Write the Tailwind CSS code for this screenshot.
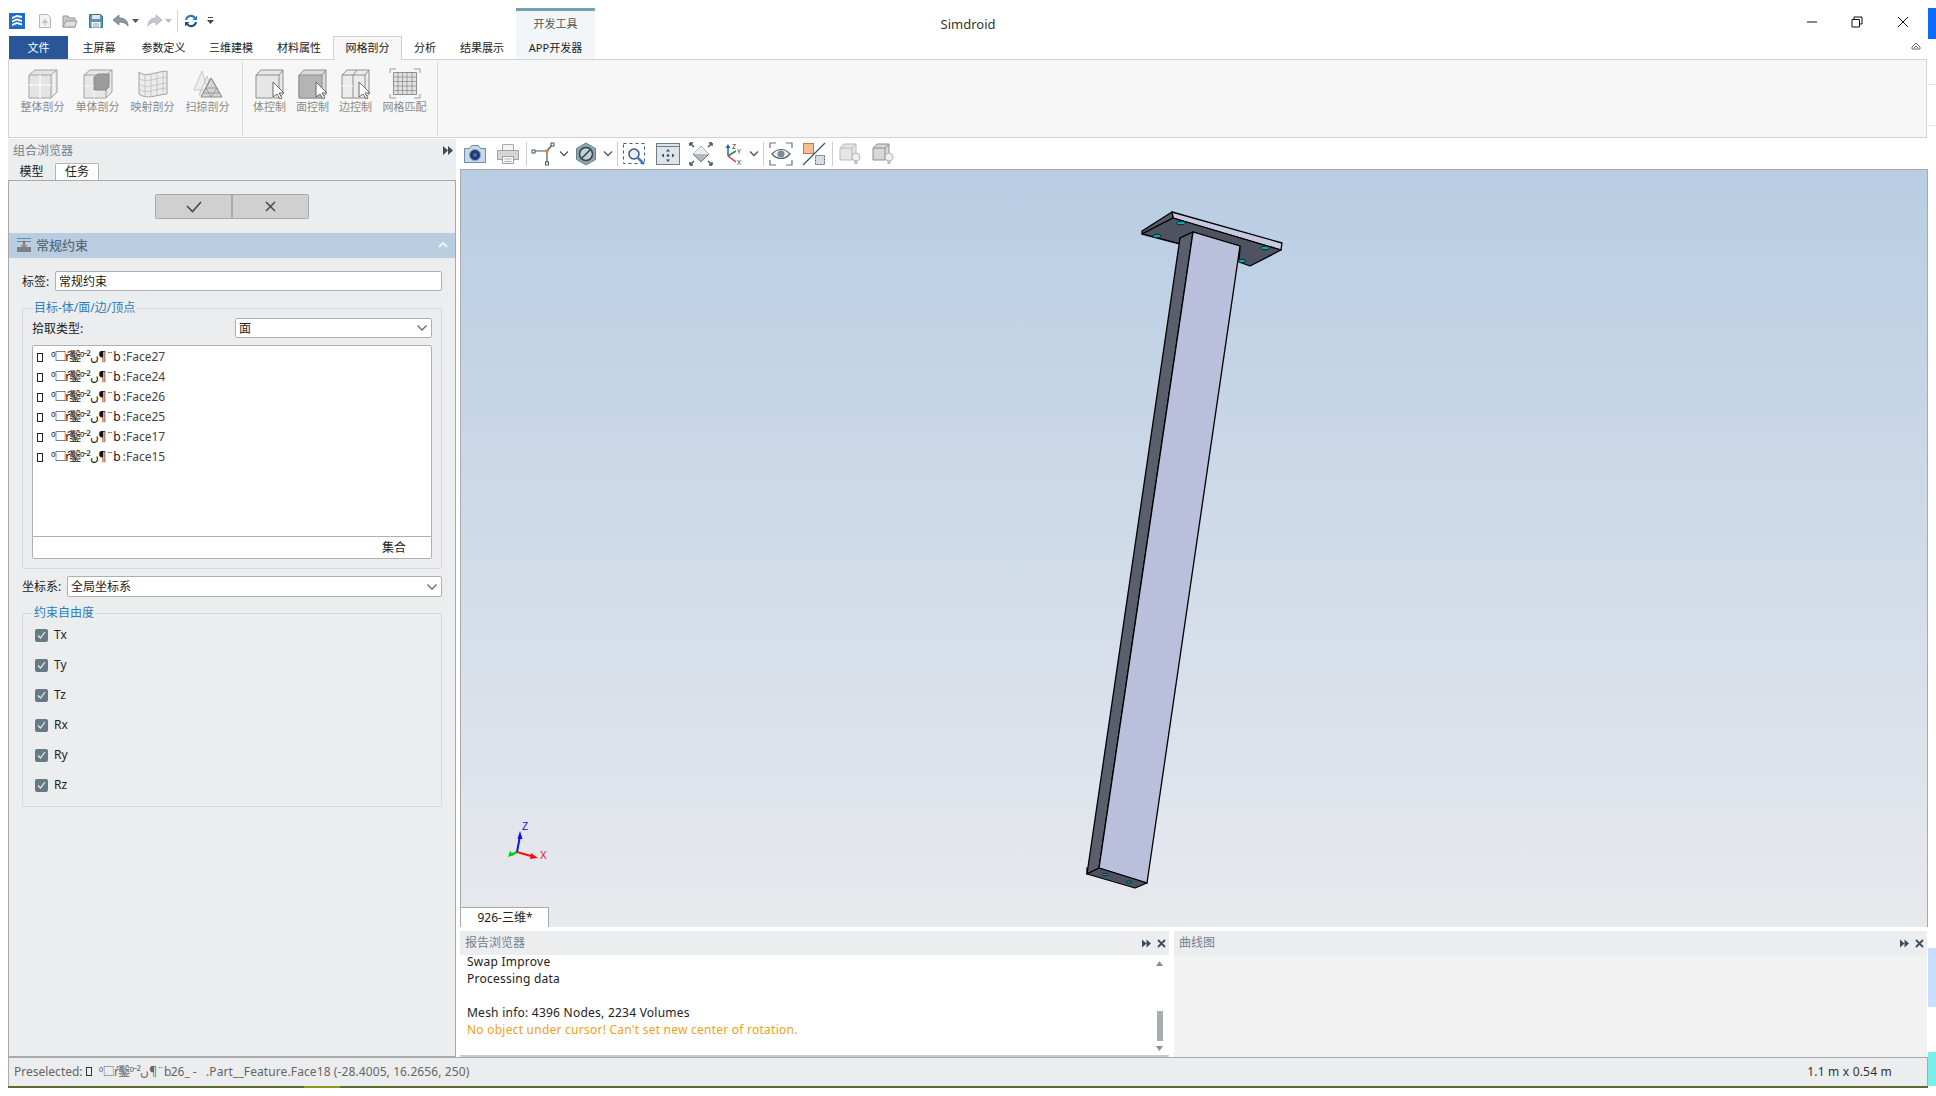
<!DOCTYPE html>
<html lang="zh-CN">
<head>
  <meta charset="UTF-8">
  <title>Simdroid</title>
  <script src="https://cdn.jsdelivr.net/npm/@tailwindcss/browser@4"></script>
</head>
<body class="bg-white">
<div class="flex w-[1936px] h-[1096px] overflow-hidden bg-white text-[12px] leading-none text-[#222] font-['Noto_Sans','Noto_Sans_CJK_SC',sans-serif]">

  <!-- main window -->
  <div class="w-[1928px] pl-[8px] flex flex-col">

    <!-- title bar -->
    <div class="h-[36px] grid grid-cols-[1fr_auto_1fr] items-center">
      <div class="flex items-center h-[36px] pt-[5px]">
        <svg class="ml-[1px] w-[16px] h-[16px]" viewBox="0 0 16 16"><rect width="16" height="16" fill="#1e6fc4"/><path d="M3 4l5-2 5 1v2L8 4 3 6zM3 7.500l5-2 5 1.500v2l-5-1.500-5 2zM3 11l5-2 5 1.500v2L8 11l-5 2z" fill="#fff"/></svg>
        <svg class="ml-[12px] w-[16px] h-[16px]" viewBox="0 0 16 16"><path d="M2.500 1.500h8l3 3v10h-11z" fill="#f2f2f2" stroke="#b5b5b5"/><path d="M8 6v6M5 9h6" stroke="#aaa"/></svg>
        <svg class="ml-[9px] w-[16px] h-[16px]" viewBox="0 0 16 16"><path d="M1 3h5l1 2h6v9H1z" fill="#c9c9c9" stroke="#999"/><path d="M1 14l3-6h11l-2 6z" fill="#dedede" stroke="#999"/></svg>
        <svg class="ml-[10px] w-[16px] h-[16px]" viewBox="0 0 16 16"><path d="M1.500 1.500h11l2 2v11h-13z" fill="#5f90b5" stroke="#41708f"/><rect x="4" y="2" width="8" height="4" fill="#dfe8ef"/><rect x="3.500" y="9" width="9" height="5.500" fill="#f3f5f7"/><path d="M5 11h6M5 13h6" stroke="#8aa"/></svg>
        <svg class="ml-[8px] w-[18px] h-[16px]" viewBox="0 0 18 16"><path d="M1 7l6-5v3c6 0 9 3 9 8-2-3-5-4-9-4v3z" fill="#8b98a8" stroke="#687688" stroke-width=".8"/></svg>
        <svg class="ml-[2px] w-[7px] h-[4px]" viewBox="0 0 7 4"><path d="M0 0h7L3.500 4z" fill="#556"/></svg>
        <svg class="ml-[8px] w-[16px] h-[16px]" viewBox="0 0 16 16"><path d="M15 7L9 2v3C4 5 1 8 1 13c2-3 4-4 8-4v3z" fill="#c4c9d0" stroke="#aab" stroke-width=".8"/></svg>
        <svg class="ml-[2px] w-[7px] h-[4px]" viewBox="0 0 7 4"><path d="M0 0h7L3.500 4z" fill="#bbb"/></svg>
        <div class="ml-[5px] w-px h-[22px] bg-[#d5d5d5]"></div>
        <svg class="ml-[5px] w-[16px] h-[16px]" viewBox="0 0 16 16"><path d="M2 7a6 6 0 0 1 10.500-3L14 2.500V7h-4.500l1.500-1.500A4 4 0 0 0 4 7z" fill="#2a79c4"/><path d="M14 9a6 6 0 0 1-10.500 3L2 13.500V9h4.500L5 10.500A4 4 0 0 0 12 9z" fill="#1c4f83"/></svg>
        <svg class="ml-[8px] w-[7px] h-[7px]" viewBox="0 0 7 7"><path d="M1 0h5v1H1zM0 3h7L3.500 7z" fill="#445"/></svg>
      </div>
      <div class="text-[13px] text-[#333] pt-[12px]">Simdroid</div>
      <div class="flex justify-end items-center h-[36px] pt-[8px]">
        <svg class="w-[12px] h-[12px]" viewBox="0 0 12 12"><path d="M1 6h10" stroke="#111"/></svg>
        <svg class="ml-[33px] w-[12px] h-[12px]" viewBox="0 0 12 12"><path d="M3 3V1h8v7H9M1 3.500h7.500V11H1z" fill="none" stroke="#111"/></svg>
        <svg class="ml-[34px] mr-[19px] w-[12px] h-[12px]" viewBox="0 0 12 12"><path d="M1 1l10 10M11 1L1 11" stroke="#111"/></svg>
      </div>
    </div>

    <!-- ribbon tabs -->
    <div class="relative h-[24px] flex items-stretch -mb-px">
      <div class="absolute left-[508px] top-[-28px] w-[79px] h-[51px] bg-[#f2f6f9] border-t-[3px] border-[#6fa3b0] pt-[7px] text-center text-[11px] text-[#555]">开发工具</div>
      <div class="ml-px w-[59px] h-[23px] bg-[#2a5699] text-white text-[11px] flex items-center justify-center">文件</div>
      <div class="w-[62px] h-[23px] text-[11px] flex items-center justify-center">主屏幕</div>
      <div class="w-[67px] h-[23px] text-[11px] flex items-center justify-center">参数定义</div>
      <div class="w-[68px] h-[23px] text-[11px] flex items-center justify-center">三维建模</div>
      <div class="w-[68px] h-[23px] text-[11px] flex items-center justify-center">材料属性</div>
      <div class="relative w-[69px] h-[24px] bg-[#f7f7f7] border border-b-0 border-[#d0d0d0] pb-[2px] text-[11px] flex items-center justify-center z-10">网格剖分</div>
      <div class="w-[46px] h-[23px] text-[11px] flex items-center justify-center">分析</div>
      <div class="w-[68px] h-[23px] text-[11px] flex items-center justify-center">结果展示</div>
      <div class="relative w-[79px] h-[23px] text-[11px] flex items-center justify-center">APP开发器</div>
      <svg class="absolute right-[7px] top-[6px] w-[10px] h-[8px]" viewBox="0 0 10 8"><path d="M1 7V5l4-4 4 4v2zM3 6l2-2 2 2" fill="none" stroke="#667"/></svg>
    </div>

    <!-- ribbon -->
    <div class="w-[1919px] h-[79px] bg-[#f7f7f7] border border-[#d2d2d2] flex pt-[2px] text-[11px] text-[#8a8a8a]">
      <div class="flex pl-[6px] w-[234px] h-[73px] border-r border-[#d8d8d8] pt-[6px]">
        <div class="w-[55px] flex flex-col items-center gap-[2px] shrink-0">
          <svg class="w-[32px] h-[31px]" viewBox="0 0 32 31"><path d="M2 7l6-5h22v22l-6 6H2z" fill="#e4e4e4" stroke="#a2a2a2"/><path d="M2 7h22v23M24 7l6-5" fill="none" stroke="#a2a2a2"/><path d="M2 17h22M13 7v23M27 5v21" stroke="#f7f7f7" stroke-width="1.500"/></svg>
          <span>整体剖分</span>
        </div>
        <div class="w-[55px] flex flex-col items-center gap-[2px] shrink-0">
          <svg class="w-[32px] h-[31px]" viewBox="0 0 32 31"><path d="M2 7l6-5h22v22l-6 6H2z" fill="#e7e7e7" stroke="#a2a2a2"/><path d="M2 7h22v23M24 7l6-5" fill="none" stroke="#a2a2a2"/><path d="M12 9l4-3h11v13l-3 3H12z" fill="#9c9c9c" stroke="#888"/><path d="M2 18h10M12 22v8" stroke="#f7f7f7"/></svg>
          <span>单体剖分</span>
        </div>
        <div class="w-[55px] flex flex-col items-center gap-[2px] shrink-0">
          <svg class="w-[32px] h-[31px]" viewBox="0 0 32 31"><path d="M2 4c7 6 14 0 28-1v23c-12 1-20 6-28 0z" fill="#ececec" stroke="#a0a0a0"/><path d="M2 10c7 6 14 0 28-1M2 16c7 6 14 0 28-1M2 21c7 6 14 0 28-1M8 6v23M14 6v23M20 4v23M26 3v23" fill="none" stroke="#bcbcbc" stroke-width=".8"/></svg>
          <span>映射剖分</span>
        </div>
        <div class="w-[55px] flex flex-col items-center gap-[2px] shrink-0">
          <svg class="w-[32px] h-[31px]" viewBox="0 0 32 31"><path d="M10 3l-8 19h14zM15 8L7 27h15z" fill="#eee" stroke="#c8c8c8"/><path d="M19 10l-10 19h21z" fill="#d4d4d4" stroke="#8c8c8c"/><path d="M14 20h11M11.500 25h16M19 10l-5 10 5 9 6-9zM14 20l-3 5M25 20l2 5" fill="none" stroke="#8c8c8c" stroke-width=".8"/></svg>
          <span>扫掠剖分</span>
        </div>
      </div>
      <div class="flex pl-[5px] w-[195px] h-[73px] border-r border-[#d8d8d8] pt-[6px]">
        <div class="w-[43px] flex flex-col items-center gap-[2px] shrink-0">
          <svg class="w-[32px] h-[31px]" viewBox="0 0 32 31"><path d="M2 7l5-5h22v24l-4 4H2z" fill="#e6e6e6" stroke="#8f8f8f"/><path d="M2 7h23v23M25 7l4-5" fill="none" stroke="#8f8f8f"/><path d="M19 14v15l4-3 3 5 2-1-3-5h5z" fill="#fff" stroke="#666"/></svg>
          <span>体控制</span>
        </div>
        <div class="w-[43px] flex flex-col items-center gap-[2px] shrink-0">
          <svg class="w-[32px] h-[31px]" viewBox="0 0 32 31"><path d="M2 7l5-5h22v24l-4 4H2z" fill="#dadada" stroke="#8f8f8f"/><path d="M2 7h23v23H2z" fill="#b5b5b5" stroke="#8f8f8f"/><path d="M25 7l4-5" stroke="#8f8f8f"/><path d="M19 14v15l4-3 3 5 2-1-3-5h5z" fill="#fff" stroke="#666"/></svg>
          <span>面控制</span>
        </div>
        <div class="w-[43px] flex flex-col items-center gap-[2px] shrink-0">
          <svg class="w-[32px] h-[31px]" viewBox="0 0 32 31"><path d="M2 7l5-5h22v24l-4 4H2z" fill="#ececec" stroke="#8f8f8f"/><path d="M2 7h23v23M25 7l4-5M13 7l4-5M13 7v23" fill="none" stroke="#8f8f8f"/><path d="M2 18h11" stroke="#fafafa"/><path d="M19 14v15l4-3 3 5 2-1-3-5h5z" fill="#fff" stroke="#666"/></svg>
          <span>边控制</span>
        </div>
        <div class="w-[55px] flex flex-col items-center gap-[2px] shrink-0">
          <svg class="w-[32px] h-[31px]" viewBox="0 0 32 31"><path d="M1 5V1h6M25 1h6v4M31 26v4h-6M7 30H1v-4" fill="none" stroke="#999"/><path d="M4.500 4.500h23v22h-23z" fill="#e2e2e2" stroke="#8f8f8f"/><path d="M9 4.500v22M13.500 4.500v22M18 4.500v22M23 4.500v22M4.500 9h23M4.500 13.500h23M4.500 18h23M4.500 22.500h23" stroke="#8f8f8f" stroke-width=".8"/></svg>
          <span>网格匹配</span>
        </div>
      </div>
    </div>

    <!-- workspace -->
    <div class="mt-[1px] h-[918px] flex">

      <!-- left browser -->
      <div class="w-[448px] flex flex-col bg-[#ecedef]">
        <div class="relative h-[24px] flex items-center pl-[5px] text-[#75808c]">组合浏览器
          <svg class="absolute right-[3px] top-[7px] w-[10px] h-[9px]" viewBox="0 0 10 9"><path d="M0 0l5 4.500L0 9zM5 0l5 4.500L5 9z" fill="#3d4d5c"/></svg>
        </div>
        <div class="h-[17px] flex items-end">
          <div class="w-[47px] h-[16px] flex items-center justify-center">模型</div>
          <div class="w-[44px] h-[17px] bg-white border border-b-0 border-[#b5b5b5] rounded-t-[2px] flex items-center justify-center">任务</div>
        </div>
        <div class="h-[877px] border border-[#a9a9a9] flex flex-col">
          <div class="mt-[13px] ml-[146px] flex w-[154px] h-[25px] border border-[#a9a9a9] rounded-[2px] bg-[#d0d0d0]">
            <div class="w-[77px] border-r-2 border-[#a9a9a9] flex items-center justify-center">
              <svg class="w-[16px] h-[12px]" viewBox="0 0 16 12"><path d="M1 5l5.500 5.500L15 1" fill="none" stroke="#3d4d5c" stroke-width="1.600"/></svg>
            </div>
            <div class="flex-1 flex items-center justify-center">
              <svg class="w-[11px] h-[11px]" viewBox="0 0 11 11"><path d="M1 1l9 9M10 1l-9 9" stroke="#3d4d5c" stroke-width="1.500"/></svg>
            </div>
          </div>

          <div class="relative mt-[14px] h-[25px] bg-[#b9cde0] flex items-center pl-[8px] pb-[1px] text-[13px] font-medium text-[#5b6b7b]">
            <svg class="w-[14px] h-[14px] mr-[5px]" viewBox="0 0 14 14"><path d="M0 .500h14M0 3.500h14" stroke="#5c8fb3"/><path d="M7 3v6" stroke="#c0392b" stroke-width="1.500"/><rect x="4" y="7" width="6" height="1.500" fill="#888"/><rect y="9" width="14" height="5" fill="#7b7f85"/></svg>
            常规约束
            <svg class="absolute right-[7px] top-[9px] w-[10px] h-[6px]" viewBox="0 0 10 6"><path d="M1 5l4-4 4 4" fill="none" stroke="#eef3f8" stroke-width="2"/></svg>
          </div>

          <div class="mt-[13px] h-[20px] flex items-center pl-[13px]">
            <span class="w-[33px] pt-[1px]">标签:</span>
            <div class="w-[387px] h-[20px] bg-white border border-[#b0b0b0] rounded-[2px] flex items-center pl-[3px] pt-[1px]">常规约束</div>
          </div>

          <!-- target group -->
          <div class="relative mt-[17px] ml-[13px] w-[420px] h-[261px] border border-[#d6d7d9] rounded-[2px] pt-[9px] pl-[9px]">
            <div class="absolute -top-[7px] left-[10px] bg-[#ecedef] px-[1px] text-[#2b7bc0]">目标-体/面/边/顶点</div>
            <div class="h-[20px] flex items-center">
              <span class="w-[203px] pt-[1px]">拾取类型:</span>
              <div class="relative w-[197px] h-[20px] bg-white border border-[#b0b0b0] rounded-[2px] flex items-center pl-[3px] pt-[1px]">面
                <svg class="absolute right-[4px] top-[6px] w-[10px] h-[6px]" viewBox="0 0 10 6"><path d="M.500.500L5 5 9.500.500" fill="none" stroke="#667" stroke-width="1.300"/></svg>
              </div>
            </div>
            <div class="mt-[7px] w-[400px] h-[214px] bg-white border border-[#b0b0b0] rounded-[2px] flex flex-col">
              <div class="h-[191px] border-b border-[#b0b0b0] pt-[1px] pl-[4px] text-[#444]">
                <div class="h-[20px] flex items-center whitespace-pre"><span class="inline-block w-[6px] h-[9px] border border-[#222] mr-[8px]"></span><span class="text-[#111] tracking-[-1.1px]">º□ŕ鑿º⁻²ں¶¨b</span> :Face27</div>
                <div class="h-[20px] flex items-center whitespace-pre"><span class="inline-block w-[6px] h-[9px] border border-[#222] mr-[8px]"></span><span class="text-[#111] tracking-[-1.1px]">º□ŕ鑿º⁻²ں¶¨b</span> :Face24</div>
                <div class="h-[20px] flex items-center whitespace-pre"><span class="inline-block w-[6px] h-[9px] border border-[#222] mr-[8px]"></span><span class="text-[#111] tracking-[-1.1px]">º□ŕ鑿º⁻²ں¶¨b</span> :Face26</div>
                <div class="h-[20px] flex items-center whitespace-pre"><span class="inline-block w-[6px] h-[9px] border border-[#222] mr-[8px]"></span><span class="text-[#111] tracking-[-1.1px]">º□ŕ鑿º⁻²ں¶¨b</span> :Face25</div>
                <div class="h-[20px] flex items-center whitespace-pre"><span class="inline-block w-[6px] h-[9px] border border-[#222] mr-[8px]"></span><span class="text-[#111] tracking-[-1.1px]">º□ŕ鑿º⁻²ں¶¨b</span> :Face17</div>
                <div class="h-[20px] flex items-center whitespace-pre"><span class="inline-block w-[6px] h-[9px] border border-[#222] mr-[8px]"></span><span class="text-[#111] tracking-[-1.1px]">º□ŕ鑿º⁻²ں¶¨b</span> :Face15</div>
              </div>
              <div class="flex-1 flex items-center justify-end pr-[25px] pt-[1px]">集合</div>
            </div>
          </div>

          <div class="mt-[7px] h-[21px] flex items-center pl-[13px]">
            <span class="w-[45px]">坐标系:</span>
            <div class="relative w-[375px] h-[21px] bg-white border border-[#b0b0b0] rounded-[2px] flex items-center pl-[3px]">全局坐标系
              <svg class="absolute right-[4px] top-[7px] w-[10px] h-[6px]" viewBox="0 0 10 6"><path d="M.500.500L5 5 9.500.500" fill="none" stroke="#667" stroke-width="1.300"/></svg>
            </div>
          </div>

          <!-- dof group -->
          <div class="relative mt-[16px] ml-[13px] w-[420px] h-[194px] border border-[#d6d7d9] rounded-[2px] pt-[6px] pl-[12px]">
            <div class="absolute -top-[7px] left-[10px] bg-[#ecedef] px-[1px] text-[#2b7bc0]">约束自由度</div>
            <div class="h-[30px] flex items-center gap-[6px]"><span class="w-[13px] h-[13px] bg-[#667a85] rounded-[2px] flex items-center justify-center"><svg class="w-[9px] h-[8px]" viewBox="0 0 9 8"><path d="M1 4.500L3.500 7 8 1" fill="none" stroke="#e6ecef" stroke-width="1.200"/></svg></span>Tx</div>
            <div class="h-[30px] flex items-center gap-[6px]"><span class="w-[13px] h-[13px] bg-[#667a85] rounded-[2px] flex items-center justify-center"><svg class="w-[9px] h-[8px]" viewBox="0 0 9 8"><path d="M1 4.500L3.500 7 8 1" fill="none" stroke="#e6ecef" stroke-width="1.200"/></svg></span>Ty</div>
            <div class="h-[30px] flex items-center gap-[6px]"><span class="w-[13px] h-[13px] bg-[#667a85] rounded-[2px] flex items-center justify-center"><svg class="w-[9px] h-[8px]" viewBox="0 0 9 8"><path d="M1 4.500L3.500 7 8 1" fill="none" stroke="#e6ecef" stroke-width="1.200"/></svg></span>Tz</div>
            <div class="h-[30px] flex items-center gap-[6px]"><span class="w-[13px] h-[13px] bg-[#667a85] rounded-[2px] flex items-center justify-center"><svg class="w-[9px] h-[8px]" viewBox="0 0 9 8"><path d="M1 4.500L3.500 7 8 1" fill="none" stroke="#e6ecef" stroke-width="1.200"/></svg></span>Rx</div>
            <div class="h-[30px] flex items-center gap-[6px]"><span class="w-[13px] h-[13px] bg-[#667a85] rounded-[2px] flex items-center justify-center"><svg class="w-[9px] h-[8px]" viewBox="0 0 9 8"><path d="M1 4.500L3.500 7 8 1" fill="none" stroke="#e6ecef" stroke-width="1.200"/></svg></span>Ry</div>
            <div class="h-[30px] flex items-center gap-[6px]"><span class="w-[13px] h-[13px] bg-[#667a85] rounded-[2px] flex items-center justify-center"><svg class="w-[9px] h-[8px]" viewBox="0 0 9 8"><path d="M1 4.500L3.500 7 8 1" fill="none" stroke="#e6ecef" stroke-width="1.200"/></svg></span>Rz</div>
          </div>
        </div>
      </div>

      <!-- right side -->
      <div class="ml-[4px] w-[1468px] flex flex-col">

        <!-- view toolbar -->
        <div class="h-[30px] flex items-center">
          <svg class="ml-[3px] w-[24px] h-[24px]" viewBox="0 0 24 24"><path d="M1.500 6.500h5l2-3h7l2 3h5v14h-21z" fill="#c9d7e6" stroke="#6d8bab"/><circle cx="12" cy="13" r="5.500" fill="#1d3a73" stroke="#8aa3bd"/><circle cx="12" cy="13" r="2" fill="#4a6fb0"/></svg>
          <svg class="ml-[9px] w-[24px] h-[24px]" viewBox="0 0 24 24"><path d="M6.500 2.500h11v6h-11z" fill="#f4f4f4" stroke="#a8a8a8"/><path d="M1.500 8.500h21v9h-21z" fill="#d6d6d6" stroke="#a0a0a0"/><path d="M6.500 14.500h11v7h-11z" fill="#f6f6f6" stroke="#a0a0a0"/><path d="M8.500 17h7M8.500 19.500h7" stroke="#b5b5b5"/></svg>
          <div class="ml-[6px] w-px h-[24px] bg-[#cfcfcf]"></div>
          <svg class="ml-[4px] w-[24px] h-[24px]" viewBox="0 0 24 24"><path d="M3 9h13M16 9l5-6M16 9v12" stroke="#445566" stroke-width="1.200"/><rect x="1" y="8" width="3" height="3" fill="#fff" stroke="#445566"/><rect x="20" y="1" width="3" height="3" fill="#fff" stroke="#445566"/><rect x="14.500" y="20" width="3" height="3" fill="#fff" stroke="#445566"/><rect x="14.500" y="7.500" width="3" height="3" fill="#e07b39"/></svg>
          <svg class="ml-[4px] w-[10px] h-[6px]" viewBox="0 0 10 6"><path d="M1 .500L5 4.500 9 .500" fill="none" stroke="#556" stroke-width="1.300"/></svg>
          <svg class="ml-[5px] w-[24px] h-[24px]" viewBox="0 0 24 24"><path d="M12 1l9.500 5.500v11L12 23l-9.500-5.500v-11z" fill="#8fa5ab" stroke="#6d8288"/><circle cx="12" cy="12" r="6.500" fill="#c3d0d4" stroke="#2e4650" stroke-width="1.600"/><path d="M8 16l8-8" stroke="#2e4650" stroke-width="1.600"/></svg>
          <svg class="ml-[5px] w-[10px] h-[6px]" viewBox="0 0 10 6"><path d="M1 .500L5 4.500 9 .500" fill="none" stroke="#556" stroke-width="1.300"/></svg>
          <div class="ml-[4px] w-px h-[24px] bg-[#cfcfcf]"></div>
          <svg class="ml-[4px] w-[24px] h-[24px]" viewBox="0 0 24 24"><path d="M1.500 1.500h21v20h-21z" fill="none" stroke="#3c5674" stroke-dasharray="3 3"/><circle cx="12" cy="12" r="5" fill="#e7eef5" stroke="#3c5674" stroke-width="1.500"/><path d="M16 16l6 6" stroke="#2f7fc1" stroke-width="2.500"/></svg>
          <svg class="ml-[10px] w-[24px] h-[24px]" viewBox="0 0 24 24"><rect x=".5" y="1.500" width="23" height="21" fill="#dfe3ea" stroke="#6a7d92"/><path d="M1 4.500h22" stroke="#6a7d92"/><path d="M12 7l2 2.500h-4zM12 20l2-2.500h-4zM5.500 13.500L8 11.500v4zM18.500 13.500L16 11.500v4z" fill="#33485f"/><circle cx="12" cy="13.500" r="1.300" fill="#33485f"/></svg>
          <svg class="ml-[9px] w-[24px] h-[24px]" viewBox="0 0 24 24"><path d="M12 4l8 8-8 8-8-8z" fill="#b6b8bc" stroke="#777"/><path d="M12 4l8 8H4z" fill="#eceef1"/><path d="M1 1l4 4M23 1l-4 4M1 23l4-4M23 23l-4-4" stroke="#3c5674" stroke-width="1.500"/><path d="M1 1h3M1 1v3M23 1h-3M23 1v3M1 23h3M1 23v-3M23 23h-3M23 23v-3" stroke="#3c5674" stroke-width="1.500"/></svg>
          <svg class="ml-[8px] w-[24px] h-[24px]" viewBox="0 0 24 24"><path d="M7 14V5" stroke="#2463b5" stroke-width="1.500"/><path d="M7 2l2.500 4h-5z" fill="#2463b5"/><path d="M7 14l8-5" stroke="#1f8f46" stroke-width="1.500"/><path d="M7 14l8 6" stroke="#d8333a" stroke-width="1.500"/><text x="11" y="7" font-size="7" fill="#333">Z</text><text x="16" y="12" font-size="7" fill="#333">Y</text><text x="16" y="23" font-size="7" fill="#333">X</text></svg>
          <svg class="ml-[4px] w-[10px] h-[6px]" viewBox="0 0 10 6"><path d="M1 .500L5 4.500 9 .500" fill="none" stroke="#556" stroke-width="1.300"/></svg>
          <div class="ml-[4px] w-px h-[24px] bg-[#cfcfcf]"></div>
          <svg class="ml-[5px] w-[24px] h-[24px]" viewBox="0 0 24 24"><path d="M1 6V1h6M17 1h6v5M23 18v5h-6M7 23H1v-5" fill="none" stroke="#5d7690" stroke-width="1.200"/><path d="M3 12c5-6 13-6 18 0-5 6-13 6-18 0z" fill="#eef1f4" stroke="#5a6775" stroke-width="1.200"/><circle cx="12" cy="12" r="3.500" fill="#7d8a97"/></svg>
          <svg class="ml-[9px] w-[24px] h-[24px]" viewBox="0 0 24 24"><rect x="1.500" y="1.500" width="10" height="10" fill="#f4bd94" stroke="#d0763c"/><rect x="13.500" y="13.500" width="9" height="9" fill="#d8dde3" stroke="#50667f" stroke-dasharray="2 1"/><path d="M1 23L23 1" stroke="#3c5674" stroke-width="1.200"/></svg>
          <div class="ml-[6px] w-px h-[24px] bg-[#cfcfcf]"></div>
          <svg class="ml-[5px] w-[24px] h-[24px]" viewBox="0 0 24 24"><path d="M2 6l4-4h12v12l-4 4H2z" fill="#e6e6e6" stroke="#b8b8b8"/><path d="M2 6h12v12M14 6l4-4" fill="none" stroke="#b8b8b8"/><circle cx="18" cy="15" r="4" fill="#efefef" stroke="#b5b5b5"/><path d="M16.500 19h3v3h-3z" fill="#bbb"/></svg>
          <svg class="ml-[9px] w-[24px] h-[24px]" viewBox="0 0 24 24"><path d="M2 6l4-4h12v12l-4 4H2z" fill="#d8d8d8" stroke="#8f8f8f"/><path d="M2 6h12v12M14 6l4-4" fill="none" stroke="#8f8f8f"/><circle cx="18" cy="15" r="4" fill="#efefef" stroke="#b5b5b5"/><path d="M16.500 19h3v3h-3z" fill="#bbb"/></svg>
        </div>

        <!-- 3D view -->
        <div class="w-[1468px] h-[758px] flex flex-col border-t border-x border-[#a9a9a9] bg-linear-to-b from-[#b8cde4] to-[#e8e9ed]">
          <svg class="w-[1466px] h-[737px] shrink-0" viewBox="461 170 1466 737">
            <g stroke="#000" stroke-width="1.300" stroke-linejoin="round">
              <path d="M1172 212L1282 243L1281 250L1173 218Z" fill="#c6c9e0"/>
              <path d="M1172 212L1142 231L1142 234L1173 218Z" fill="#565a68"/>
              <path d="M1173 218L1281 250L1250 266L1239 262L1240 246L1193 232L1180 238L1180 244L1142 234Z" fill="#4f5361"/>
              <path d="M1180 238L1193 232L1099 868L1087 874Z" fill="#5b5f6d"/>
              <path d="M1193 232L1240 246L1147 883L1099 868Z" fill="#babfdc"/>
              <path d="M1087 868L1087 874L1135 888L1147 883L1099 868L1087 874Z" fill="#4f5361"/>
            </g>
            <g fill="#0fa7a8" stroke="#0b2a30" stroke-width="1">
              <ellipse cx="1181" cy="223" rx="4.500" ry="1.800"/>
              <ellipse cx="1157" cy="236" rx="4" ry="1.800"/>
              <ellipse cx="1265" cy="248" rx="4.500" ry="1.800"/>
              <ellipse cx="1242" cy="261" rx="3.500" ry="1.800"/>
              <ellipse cx="1105" cy="874.500" rx="3" ry="1.200"/>
              <ellipse cx="1129" cy="882" rx="3" ry="1.200"/>
            </g>
            <path d="M517 852L511 855" stroke="#00d000" stroke-width="2.500"/><path d="M508 857l2-6 4 4z" fill="#00d000"/>
            <path d="M517 852L520 836" stroke="#1010e0" stroke-width="2"/><path d="M520 831l2.500 8h-5z" fill="#1010e0"/>
            <path d="M517 852L531 856" stroke="#f01010" stroke-width="2"/><path d="M538 858l-8 1 1-6z" fill="#f01010"/>
            <text x="522" y="830" font-size="10" fill="#1010e0" font-family="Liberation Sans">Z</text>
            <text x="540" y="859" font-size="10" fill="#f01010" font-family="Liberation Sans">X</text>
          </svg>
          <div class="w-[89px] h-[20px] -ml-px bg-white border-x border-t border-[#a9a9a9] flex items-center justify-center pl-[1px]">926-三维*</div>
        </div>

        <!-- bottom panels -->
        <div class="mt-[4px] h-[126px] flex">
          <div class="w-[709px] flex flex-col bg-[#ecedef]">
            <div class="relative h-[24px] flex items-center pl-[5px] text-[#75808c]">报告浏览器
              <svg class="absolute right-[18px] top-[8px] w-[9px] h-[9px]" viewBox="0 0 10 9"><path d="M0 0l5 4.500L0 9zM5 0l5 4.500L5 9z" fill="#3d4d5c"/></svg>
              <svg class="absolute right-[3px] top-[8px] w-[9px] h-[9px]" viewBox="0 0 9 9"><path d="M1 1l7 7M8 1L1 8" stroke="#3d4d5c" stroke-width="1.800"/></svg>
            </div>
            <div class="relative h-[102px] bg-white rounded-[2px] border-b-2 border-[#c9cacc] pl-[7px] pt-[1px] text-[12px] leading-[17px] tracking-[0.24px]">
              <div class="h-[14px] leading-[12px]">Swap Improve</div>
              <div>Processing data</div>
              <div class="h-[17px]"></div>
              <div>Mesh info: 4396 Nodes, 2234 Volumes</div>
              <div class="text-[#f0a020]">No object under cursor! Can't set new center of rotation.</div>
              <svg class="absolute right-[6px] top-[6px] w-[7px] h-[5px]" viewBox="0 0 7 5"><path d="M3.500 0L7 5H0z" fill="#8a9097"/></svg>
              <div class="absolute right-[6px] top-[56px] w-[6px] h-[30px] bg-[#a8adb2]"></div>
              <svg class="absolute right-[6px] top-[91px] w-[7px] h-[5px]" viewBox="0 0 7 5"><path d="M0 0h7L3.500 5z" fill="#8a9097"/></svg>
            </div>
          </div>
          <div class="ml-[5px] w-[753px] flex flex-col bg-[#f2f2f2]">
            <div class="relative h-[24px] bg-[#ecedef] flex items-center pl-[5px] text-[#75808c]">曲线图
              <svg class="absolute right-[18px] top-[8px] w-[9px] h-[9px]" viewBox="0 0 10 9"><path d="M0 0l5 4.500L0 9zM5 0l5 4.500L5 9z" fill="#3d4d5c"/></svg>
              <svg class="absolute right-[3px] top-[8px] w-[9px] h-[9px]" viewBox="0 0 9 9"><path d="M1 1l7 7M8 1L1 8" stroke="#3d4d5c" stroke-width="1.800"/></svg>
            </div>
          </div>
        </div>
      </div>
    </div>

    <!-- status bar -->
    <div class="w-[1920px] h-[29px] bg-[#ecedef] border-t border-x border-[#a9a9a9] flex items-center justify-between pl-[5px] pr-[35px]">
      <span class="text-[#666] whitespace-pre">Preselected: <span class="inline-block w-[6px] h-[9px] border border-[#333] mr-[4px]"></span> <span class="tracking-[-0.7px]">º□ŕ鑿º⁻²ں¶¨b</span>26_ -  <span class="ml-[3px] tracking-[0.1px]">.Part__Feature.Face18 (-28.4005, 16.2656, 250)</span></span>
      <span class="text-[#333] tracking-[0.2px]">1.1 m x 0.54 m</span>
    </div>
    <div class="w-[1920px] h-[2px] flex bg-[#5f6b32]"><div class="ml-[296px] w-[36px] bg-[#8a9a20]"></div></div>
  </div>

  <!-- edge of the window behind -->
  <div class="w-[8px] flex flex-col">
    <div class="mt-[8px] h-[31px] bg-[#0a6cff]"></div>
    <div class="mt-[45px] h-px bg-[#e5e5e5]"></div>
    <div class="mt-[40px] h-px bg-[#e5e5e5]"></div>
    <div class="mt-[822px] h-[59px] bg-[#c9defc]"></div>
    <div class="mt-[45px] h-[34px] bg-[#7aeee8]"></div>
  </div>
</div>
</body>
</html>
